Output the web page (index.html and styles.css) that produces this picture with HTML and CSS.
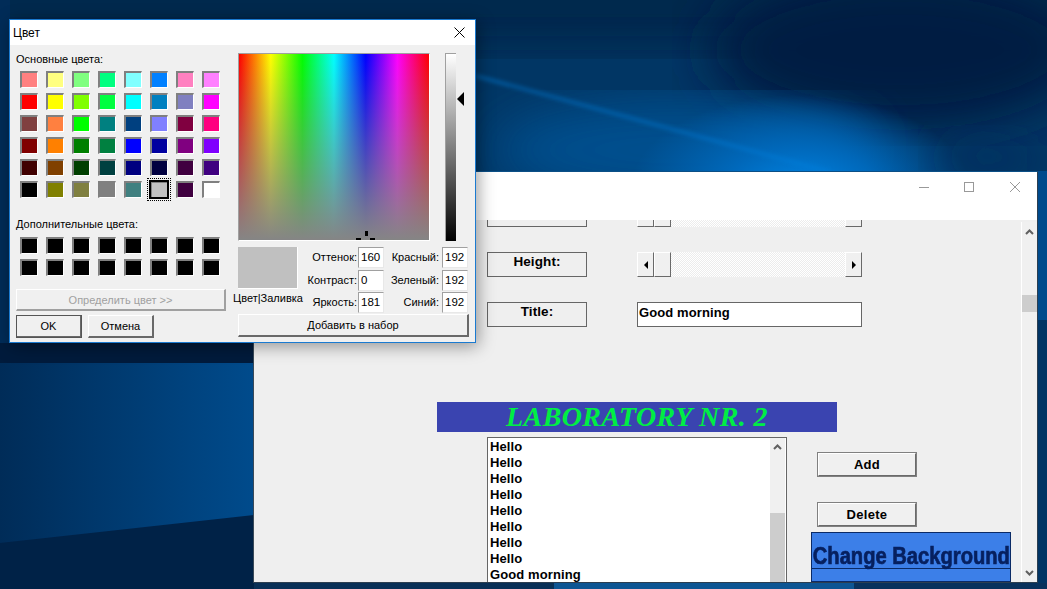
FILE: index.html
```html
<!DOCTYPE html>
<html lang="ru">
<head>
  <meta charset="utf-8">
  <title>Цвет</title>
  <link rel="stylesheet" href="styles.css">
</head>
<body>

  <svg class="wallpaper" viewBox="0 0 1047 589" preserveAspectRatio="none">
    <defs>
      <filter id="soft"><feGaussianBlur stdDeviation="26"/></filter>
      <filter id="softer"><feGaussianBlur stdDeviation="2"/></filter>
      <radialGradient id="beam">
        <stop offset="0" stop-color="#0084e4"/>
        <stop offset="0.45" stop-color="#0068ba"/>
        <stop offset="1" stop-color="#0068ba" stop-opacity="0"/>
      </radialGradient>
      <linearGradient id="leftband" x1="0" x2="1" y1="0" y2="0">
        <stop offset="0" stop-color="#002c58"/>
        <stop offset="1" stop-color="#004b8c"/>
      </linearGradient>
    </defs>
    <rect width="1047" height="589" fill="#013664"/>
    <rect x="-60" y="-40" width="1167" height="90" fill="#01264c" filter="url(#soft)"/>
    <ellipse cx="900" cy="50" rx="190" ry="80" fill="#001f42" filter="url(#soft)"/>
    <ellipse cx="680" cy="150" rx="190" ry="50" fill="#00508f" filter="url(#soft)"/>
    <ellipse cx="800" cy="190" rx="170" ry="95" fill="url(#beam)"/>
    <polygon points="960,130 1047,150 1047,175 930,175" fill="#012f5e" filter="url(#soft)"/>
    <line x1="476" y1="76" x2="830" y2="172" stroke="#0a80dc" stroke-opacity="0.55" stroke-width="3" filter="url(#softer)"/>
    <rect x="0" y="0" width="10" height="360" fill="#012c58"/>
    <rect x="0" y="345" width="254" height="244" fill="url(#leftband)"/>
    <rect x="0" y="343" width="254" height="20" fill="#001b3c"/>
    <polygon points="0,543 254,515 254,589 0,589" fill="#002247"/>
    <rect x="1038" y="171" width="9" height="150" fill="#004a8c"/>
    <rect x="1038" y="320" width="9" height="269" fill="#013464"/>
    <rect x="254" y="583" width="300" height="6" fill="#082f56"/>
    <rect x="554" y="583" width="300" height="6" fill="#0d5593"/>
    <rect x="854" y="583" width="193" height="6" fill="#08315c"/>
  </svg>

  <div class="window">
    <div class="window-title">
      <button class="caption-btn">
        <svg width="10" height="10" viewBox="0 0 10 10"><path d="M1 5.5H11" stroke="#999" fill="none"/></svg>
      </button>
      <button class="caption-btn">
        <svg width="10" height="10" viewBox="0 0 10 10"><rect x="0.5" y="0.5" width="9" height="9" stroke="#999" fill="none"/></svg>
      </button>
      <button class="caption-btn">
        <svg width="10" height="10" viewBox="0 0 10 10"><path d="M0 0L10 10M10 0L0 10" stroke="#999" fill="none"/></svg>
      </button>
    </div>
    <div class="window-client">
      <div class="form">
        <div class="form-row first-row">
          <div class="caption"></div>
          <div class="hscroll">
            <span class="hscroll-btn"></span><span class="hscroll-thumb"></span><span class="hscroll-track"></span><span class="hscroll-btn"></span>
          </div>
        </div>
        <div class="form-row">
          <div class="caption">Height:</div>
          <div class="hscroll">
            <span class="hscroll-btn"><i class="tri tri-left"></i></span><span class="hscroll-thumb"></span><span class="hscroll-track"></span><span class="hscroll-btn"><i class="tri tri-right"></i></span>
          </div>
        </div>
        <div class="form-row">
          <div class="caption">Title:</div>
          <div class="title-input">Good morning</div>
        </div>

        <div class="banner">LABORATORY NR. 2</div>

        <div class="list-row">
          <div class="listbox">
            <ul class="list-items">
              <li>Hello</li>
              <li>Hello</li>
              <li>Hello</li>
              <li>Hello</li>
              <li>Hello</li>
              <li>Hello</li>
              <li>Hello</li>
              <li>Hello</li>
              <li>Good morning</li>
            </ul>
            <div class="list-scroll">
              <svg class="chevron" width="9" height="6" viewBox="0 0 9 6"><path d="M1 5L4.5 1.5L8 5" stroke="#606060" stroke-width="2" fill="none"/></svg>
              <div class="list-thumb"></div>
            </div>
          </div>
          <div class="actions">
            <button class="push-btn">Add</button>
            <button class="push-btn">Delete</button>
            <button class="change-bg"><span class="change-line"><b class="change-text">Change Background</b></span></button>
          </div>
        </div>
      </div>
      <div class="vscroll">
        <svg class="chevron" width="9" height="6" viewBox="0 0 9 6"><path d="M1 5L4.5 1.5L8 5" stroke="#606060" stroke-width="2" fill="none"/></svg>
        <div class="vscroll-thumb"></div>
        <svg class="chevron chevron-bottom" width="9" height="6" viewBox="0 0 9 6"><path d="M1 1L4.5 4.5L8 1" stroke="#606060" stroke-width="2" fill="none"/></svg>
      </div>
    </div>
  </div>

  <div class="dialog">
    <div class="dialog-title">
      <span>Цвет</span>
      <svg width="11" height="11" viewBox="0 0 11 11"><path d="M0.5 0.5L10.5 10.5M10.5 0.5L0.5 10.5" stroke="#000" fill="none"/></svg>
    </div>
    <div class="dialog-body">
      <div class="left-col">
        <div class="group-label">Основные цвета:</div>
        <div class="swatches">
          <span class="sw c-ff8080"></span><span class="sw c-ffff80"></span><span class="sw c-80ff80"></span><span class="sw c-00ff80"></span><span class="sw c-80ffff"></span><span class="sw c-0080ff"></span><span class="sw c-ff80c0"></span><span class="sw c-ff80ff"></span>
          <span class="sw c-ff0000"></span><span class="sw c-ffff00"></span><span class="sw c-80ff00"></span><span class="sw c-00ff40"></span><span class="sw c-00ffff"></span><span class="sw c-0080c0"></span><span class="sw c-8080c0"></span><span class="sw c-ff00ff"></span>
          <span class="sw c-804040"></span><span class="sw c-ff8040"></span><span class="sw c-00ff00"></span><span class="sw c-008080"></span><span class="sw c-004080"></span><span class="sw c-8080ff"></span><span class="sw c-800040"></span><span class="sw c-ff0080"></span>
          <span class="sw c-800000"></span><span class="sw c-ff8000"></span><span class="sw c-008000"></span><span class="sw c-008040"></span><span class="sw c-0000ff"></span><span class="sw c-0000a0"></span><span class="sw c-800080"></span><span class="sw c-8000ff"></span>
          <span class="sw c-400000"></span><span class="sw c-804000"></span><span class="sw c-004000"></span><span class="sw c-004040"></span><span class="sw c-000080"></span><span class="sw c-000040"></span><span class="sw c-400040"></span><span class="sw c-400080"></span>
          <span class="sw c-000000"></span><span class="sw c-808000"></span><span class="sw c-808040"></span><span class="sw c-808080"></span><span class="sw c-408080"></span><span class="sw c-c0c0c0 selected"></span><span class="sw c-400040"></span><span class="sw c-ffffff"></span>
        </div>
        <div class="group-label custom-label">Дополнительные цвета:</div>
        <div class="swatches">
          <span class="sw c-000000"></span><span class="sw c-000000"></span><span class="sw c-000000"></span><span class="sw c-000000"></span><span class="sw c-000000"></span><span class="sw c-000000"></span><span class="sw c-000000"></span><span class="sw c-000000"></span>
          <span class="sw c-000000"></span><span class="sw c-000000"></span><span class="sw c-000000"></span><span class="sw c-000000"></span><span class="sw c-000000"></span><span class="sw c-000000"></span><span class="sw c-000000"></span><span class="sw c-000000"></span>
        </div>
        <button class="win-btn define-btn" disabled>Определить цвет &gt;&gt;</button>
        <div class="ok-row">
          <button class="win-btn ok-btn">OK</button>
          <button class="win-btn cancel-btn">Отмена</button>
        </div>
      </div>

      <div class="right-col">
        <div class="picker-row">
          <div class="hue-field">
            <i class="cross cross-top"></i>
            <i class="cross cross-left"></i>
            <i class="cross cross-right"></i>
          </div>
          <div class="lum-bar"><i class="lum-arrow"></i></div>
        </div>
        <div class="values-row">
          <div class="preview-col">
            <div class="preview"></div>
            <div class="preview-label">Цвет|Заливка</div>
          </div>
          <div class="values">
            <label>Оттенок:</label><span class="val">160</span>
            <label class="rgb-label">Красный:</label><span class="val">192</span>
            <label>Контраст:</label><span class="val">0</span>
            <label class="rgb-label">Зеленый:</label><span class="val">192</span>
            <label>Яркость:</label><span class="val">181</span>
            <label class="rgb-label">Синий:</label><span class="val">192</span>
          </div>
        </div>
        <button class="win-btn add-btn">Добавить в набор</button>
      </div>
    </div>
  </div>

</body>
</html>
```

FILE: styles.css
```css
* {
  box-sizing: border-box;
}

html, body {
  margin: 0;
  height: 100%;
}

body {
  position: relative;
  overflow: hidden;
  background: #013a70;
  font-family: "Liberation Sans", sans-serif;
  font-size: 12px;
  color: #000;
}

button {
  font-family: inherit;
  padding: 0;
}

.wallpaper {
  position: absolute;
  top: 0;
  left: 0;
  width: 1047px;
  height: 589px;
}

/* back window */
.window {
  position: absolute;
  left: 253px;
  top: 171px;
  width: 785px;
  height: 412px;
  display: flex;
  flex-direction: column;
  background: #efefef;
  border-top: 1px solid #0b4f86;
  border-right: 1px solid #2c3e50;
  border-bottom: 1px solid #2c3e50;
  border-left: 1px solid #3a4a58;
}

.window-title {
  height: 48px;
  flex: none;
  background: #fff;
  display: flex;
  justify-content: flex-end;
  align-items: flex-start;
  padding-right: 0;
}

.caption-btn {
  width: 46px;
  height: 29px;
  border: 0;
  background: none;
  display: flex;
  align-items: center;
  justify-content: center;
}

.caption-btn:last-child {
  margin-right: -1px;
}

.caption-btn svg {
  overflow: visible;
}

.window-client {
  flex: 1;
  min-height: 0;
  display: flex;
}

.form {
  flex: 1;
  overflow: hidden;
  font-family: "Liberation Sans", sans-serif;
  font-size: 13px;
  font-weight: bold;
  letter-spacing: 0.1px;
}

.form-row {
  display: flex;
  gap: 50px;
  margin: 25px 0 0 233px;
  height: 25px;
}

.first-row {
  margin-top: -18px;
}

.caption {
  width: 100px;
  height: 25px;
  border: 1px solid #666;
  text-align: center;
  line-height: 17px;
  font-size: 13.5px;
}

.hscroll {
  width: 225px;
  height: 25px;
  display: flex;
}

.hscroll-btn,
.hscroll-thumb {
  width: 17px;
  flex: none;
  background: #f0f0f0;
  border-top: 1px solid #fff;
  border-left: 1px solid #fff;
  border-right: 1px solid #696969;
  border-bottom: 1px solid #696969;
  display: flex;
  align-items: center;
  justify-content: center;
}

.hscroll-track {
  flex: 1;
  background: repeating-conic-gradient(#fff 0 25%, #ececec 0 50%) 0 0 / 2px 2px;
}

.tri {
  display: block;
  width: 0;
  height: 0;
  border-top: 4px solid transparent;
  border-bottom: 4px solid transparent;
}

.tri-left {
  border-right: 4px solid #000;
}

.tri-right {
  border-left: 4px solid #000;
}

.title-input {
  width: 225px;
  height: 25px;
  background: #fff;
  border: 1px solid #666;
  padding-left: 1px;
  line-height: 19px;
}

.banner {
  width: 400px;
  height: 30px;
  margin: 75px 0 0 183px;
  background: #3a44b0;
  color: #00ee44;
  font-family: "Liberation Serif", serif;
  font-style: italic;
  font-size: 28px;
  line-height: 29px;
  letter-spacing: 0.4px;
  text-align: center;
}

.list-row {
  display: flex;
  margin: 5px 0 0 233px;
}

.listbox {
  width: 300px;
  height: 170px;
  flex: none;
  display: flex;
  background: #fff;
  border: 1px solid #666;
  padding: 1px 1px 0 2px;
}

.list-items {
  flex: 1;
  margin: 0;
  padding: 0;
  list-style: none;
  line-height: 16px;
}

.list-scroll {
  width: 15px;
  background: #f0f0f0;
  display: flex;
  flex-direction: column;
  align-items: center;
  margin-top: -1px;
}

.list-scroll .chevron {
  margin-top: 6px;
}

.list-thumb {
  width: 15px;
  height: 80px;
  margin-top: 63px;
  background: #cdcdcd;
}

.actions {
  display: flex;
  flex-direction: column;
  align-items: flex-start;
  margin-left: 24px;
  padding-top: 15px;
}

.push-btn {
  width: 100px;
  height: 25px;
  margin-left: 6px;
  margin-bottom: 25px;
  background: #f0f0f0;
  border-top: 2px solid #fff;
  border-left: 2px solid #fff;
  border-right: 2px solid #6a6a6a;
  border-bottom: 2px solid #6a6a6a;
  outline: 1px solid #808080;
  outline-offset: -1px;
  font-weight: bold;
  font-size: 13px;
  letter-spacing: 0.3px;
  color: #000;
}

.push-btn + .push-btn {
  margin-bottom: 5px;
}

.change-bg {
  width: 200px;
  height: 50px;
  flex: none;
  background: #3c7fe8;
  border: 1px solid #0a2a66;
  display: flex;
  flex-direction: column;
  align-items: stretch;
}

.change-line {
  display: flex;
  justify-content: center;
  height: 36px;
  border-bottom: 1px solid #0a2a66;
}

.change-text {
  display: block;
  flex: none;
  margin-top: 10px;
  line-height: 26px;
  font-size: 24px;
  color: #06205f;
  white-space: nowrap;
  transform: scaleX(0.84);
  -webkit-text-stroke: 0.7px #06205f;
}

.vscroll {
  width: 16px;
  flex: none;
  margin-top: 2px;
  background: #f0f0f0;
  border-left: 1px solid #fff;
  display: flex;
  flex-direction: column;
  align-items: center;
}

.vscroll .chevron {
  margin-top: 7px;
}

.vscroll-thumb {
  width: 15px;
  height: 17px;
  margin-top: 60px;
  background: #cdcdcd;
}

.vscroll .chevron-bottom {
  margin-top: auto;
  margin-bottom: 6px;
}

/* colour dialog */
.dialog {
  position: absolute;
  left: 9px;
  top: 19px;
  width: 467px;
  height: 324px;
  display: flex;
  flex-direction: column;
  background: #f0f0f0;
  border: 1px solid #1a7ad0;
  box-shadow: 2px 3px 16px rgba(0, 0, 0, 0.4);
}

.dialog-title {
  height: 25px;
  flex: none;
  background: #fff;
  display: flex;
  align-items: center;
  justify-content: space-between;
  padding: 0 10px 0 3px;
}

.dialog-body {
  flex: 1;
  display: flex;
  padding: 7px 0 0 6px;
  font-size: 11px;
}

.left-col {
  width: 210px;
  flex: none;
}

.group-label {
  height: 14px;
  line-height: 14px;
  margin-bottom: 5px;
  white-space: nowrap;
}

.custom-label {
  margin-top: 19px;
  margin-bottom: 6px;
}

.swatches {
  display: grid;
  grid-template-columns: repeat(8, 18px);
  grid-auto-rows: 17px;
  column-gap: 8px;
  row-gap: 5px;
  margin-left: 4px;
}

.sw {
  position: relative;
  display: block;
  border-top: 2px solid #808080;
  border-left: 2px solid #808080;
  border-right: 1px solid #fff;
  border-bottom: 1px solid #fff;
}

.sw.selected::after {
  content: "";
  position: absolute;
  top: -5px;
  left: -5px;
  right: -4px;
  bottom: -4px;
  border: 1px dotted #000;
  box-shadow: inset 0 0 0 1px #f0f0f0, inset 0 0 0 3px #000;
}

.c-ff8080 { background: #ff8080; }
.c-ffff80 { background: #ffff80; }
.c-80ff80 { background: #80ff80; }
.c-00ff80 { background: #00ff80; }
.c-80ffff { background: #80ffff; }
.c-0080ff { background: #0080ff; }
.c-ff80c0 { background: #ff80c0; }
.c-ff80ff { background: #ff80ff; }
.c-ff0000 { background: #ff0000; }
.c-ffff00 { background: #ffff00; }
.c-80ff00 { background: #80ff00; }
.c-00ff40 { background: #00ff40; }
.c-00ffff { background: #00ffff; }
.c-0080c0 { background: #0080c0; }
.c-8080c0 { background: #8080c0; }
.c-ff00ff { background: #ff00ff; }
.c-804040 { background: #804040; }
.c-ff8040 { background: #ff8040; }
.c-00ff00 { background: #00ff00; }
.c-008080 { background: #008080; }
.c-004080 { background: #004080; }
.c-8080ff { background: #8080ff; }
.c-800040 { background: #800040; }
.c-ff0080 { background: #ff0080; }
.c-800000 { background: #800000; }
.c-ff8000 { background: #ff8000; }
.c-008000 { background: #008000; }
.c-008040 { background: #008040; }
.c-0000ff { background: #0000ff; }
.c-0000a0 { background: #0000a0; }
.c-800080 { background: #800080; }
.c-8000ff { background: #8000ff; }
.c-400000 { background: #400000; }
.c-804000 { background: #804000; }
.c-004000 { background: #004000; }
.c-004040 { background: #004040; }
.c-000080 { background: #000080; }
.c-000040 { background: #000040; }
.c-400040 { background: #400040; }
.c-400080 { background: #400080; }
.c-000000 { background: #000000; }
.c-808000 { background: #808000; }
.c-808040 { background: #808040; }
.c-808080 { background: #808080; }
.c-408080 { background: #408080; }
.c-c0c0c0 { background: #c0c0c0; }
.c-ffffff { background: #ffffff; }

.win-btn {
  display: block;
  background: #f0f0f0;
  border-top: 1px solid #fff;
  border-left: 1px solid #fff;
  border-right: 2px solid #696969;
  border-bottom: 2px solid #696969;
  font-size: 11px;
  color: #000;
  box-shadow: inset 0 0 0 1px #f0f0f0;
}

.define-btn {
  width: 210px;
  height: 22px;
  margin-top: 13px;
  color: #a0a0a0;
  border-right-color: #a0a0a0;
  border-bottom-color: #a0a0a0;
}

.ok-row {
  display: flex;
  gap: 6px;
  margin-top: 4px;
}

.ok-btn,
.cancel-btn {
  width: 66px;
  height: 23px;
}

.ok-btn {
  outline: 1px solid #555;
  outline-offset: -1px;
}

.right-col {
  width: 231px;
  margin-left: 12px;
  flex: none;
}

.picker-row {
  display: flex;
  align-items: flex-start;
  margin-top: 1px;
}

.hue-field {
  position: relative;
  width: 192px;
  height: 188px;
  flex: none;
  border-top: 1px solid #a0a0a0;
  border-left: 1px solid #a0a0a0;
  border-right: 1px solid #fff;
  border-bottom: 1px solid #fff;
  background:
    linear-gradient(to bottom, rgba(128, 128, 128, 0), #858585),
    linear-gradient(to right, #f00, #ff0 16.67%, #0f0 33.33%, #0ff 50%, #00f 66.67%, #f0f 83.33%, #f00);
}

.cross {
  position: absolute;
  background: #000;
}

.cross-top {
  left: 126px;
  bottom: 4px;
  width: 3px;
  height: 5px;
}

.cross-left {
  left: 117px;
  bottom: 0;
  width: 5px;
  height: 2px;
}

.cross-right {
  left: 131px;
  bottom: 0;
  width: 5px;
  height: 2px;
}

.lum-bar {
  position: relative;
  width: 11px;
  height: 188px;
  margin-left: 15px;
  flex: none;
  border-top: 1px solid #a0a0a0;
  border-left: 1px solid #a0a0a0;
  background: linear-gradient(to bottom, #fff, #000);
}

.lum-arrow {
  position: absolute;
  left: 11px;
  top: 38px;
  width: 0;
  height: 0;
  border-top: 7px solid transparent;
  border-bottom: 7px solid transparent;
  border-right: 7px solid #000;
}

.values-row {
  display: flex;
  margin-top: 6px;
}

.preview-col {
  width: 60px;
  flex: none;
}

.preview {
  height: 42px;
  background: #c0c0c0;
  border-right: 1px solid #fff;
  border-bottom: 1px solid #fff;
}

.preview-label {
  width: 70px;
  margin: 2px 0 0 -5px;
  text-align: center;
  line-height: 14px;
  white-space: nowrap;
}

.values {
  display: grid;
  grid-template-columns: 60px 26px 58px 26px;
  grid-auto-rows: 21px;
  row-gap: 1.5px;
  column-gap: 0;
}

.values label {
  text-align: right;
  line-height: 21px;
  white-space: nowrap;
  padding-right: 1px;
}

.values .rgb-label {
  padding-right: 3px;
}

.val {
  background: #fff;
  border-top: 1px solid #a0a0a0;
  border-left: 1px solid #a0a0a0;
  border-right: 1px solid #e8e8e8;
  border-bottom: 1px solid #e8e8e8;
  padding-left: 2px;
  font-size: 11.5px;
  line-height: 18px;
}

.add-btn {
  width: 231px;
  height: 23px;
  margin-top: 1px;
}
```
